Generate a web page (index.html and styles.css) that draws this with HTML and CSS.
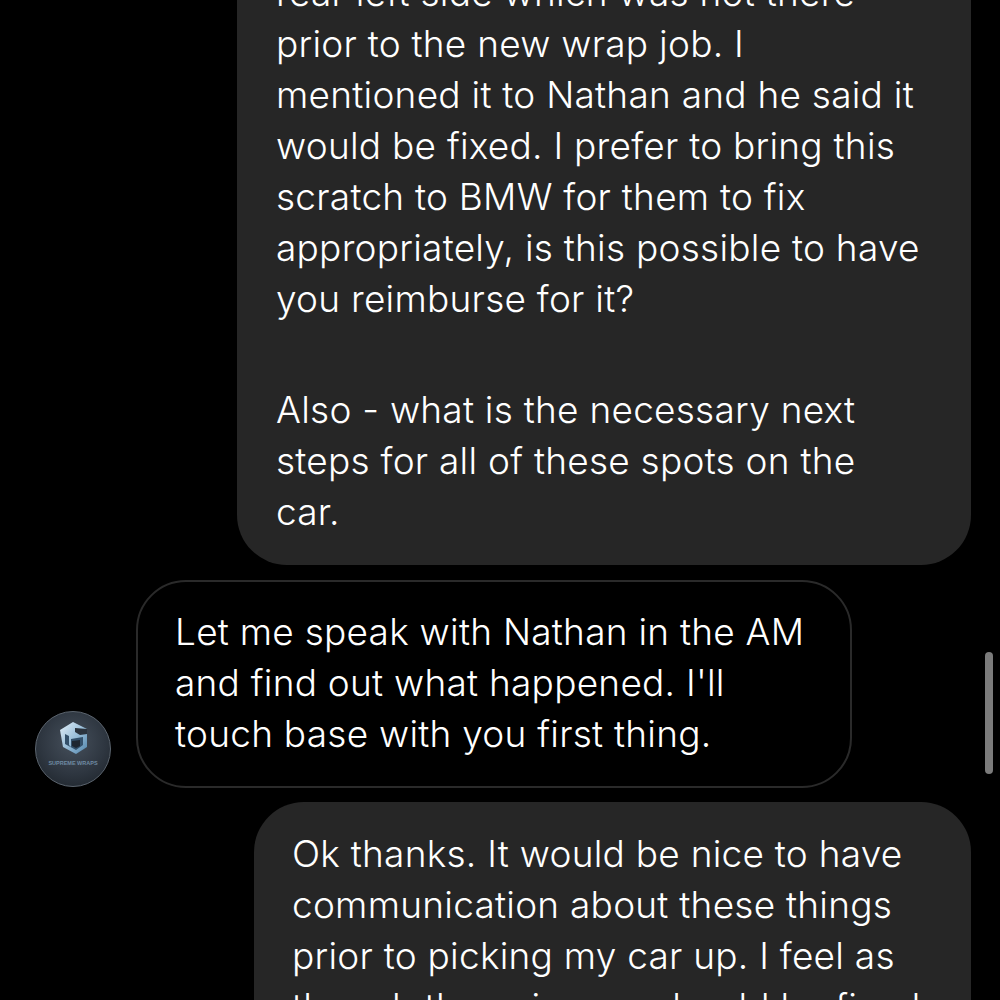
FILE: index.html
```html
<!DOCTYPE html>
<html lang="en">
<head>
    <meta charset="UTF-8">
    <meta name="viewport" content="width=device-width, initial-scale=1.0">
    <title>Messages</title>
    <link rel="stylesheet" href="styles.css">
</head>
<body>
    <div class="thread">
        <div class="row row-sent">
            <div class="bubble bubble-sent bubble-wide">
                <p>rear left side which was not there<br>prior to the new wrap job. I<br>mentioned it to Nathan and he said it<br>would be fixed. I prefer to bring this<br>scratch to BMW for them to fix<br>appropriately, is this possible to have<br>you reimburse for it?</p>
                <p>Also - what is the necessary next<br>steps for all of these spots on the<br>car.</p>
            </div>
        </div>

        <div class="row row-received">
            <svg class="avatar" viewBox="0 0 78 78" role="img" aria-label="Supreme Wraps logo">
                <defs>
                    <radialGradient id="discFill" cx="50%" cy="40%" r="62%">
                        <stop offset="0" stop-color="#46505c"/>
                        <stop offset="0.7" stop-color="#2e3640"/>
                        <stop offset="1" stop-color="#232a32"/>
                    </radialGradient>
                    <linearGradient id="cubeFill" x1="0" y1="0" x2="1" y2="1">
                        <stop offset="0" stop-color="#e2eff8"/>
                        <stop offset="0.5" stop-color="#9cc0da"/>
                        <stop offset="1" stop-color="#4f83aa"/>
                    </linearGradient>
                </defs>
                <circle cx="39" cy="39" r="37.5" fill="url(#discFill)" stroke="#5b646e" stroke-width="1"/>
                <path d="M26 20 L39 12 L53 19 L53 37 L42 44 L29 37 Z" fill="url(#cubeFill)"/>
                <path d="M41 18 L53 19 L53 24 L46 25 L41 22 Z" fill="#2b333d"/>
                <path d="M31 24 L35 26 L35 35 L37 37 L37 29 L49 27 L49 35 L42 40 L31 34 Z" fill="#33506a"/>
                <path d="M38 31 L46 30 L46 36 L42 38 L38 36 Z" fill="#1e2630"/>
                <text class="avatar-label" x="39" y="55" text-anchor="middle">SUPREME WRAPS</text>
            </svg>
            <div class="bubble bubble-received">
                <p>Let me speak with Nathan in the AM<br>and find out what happened. I'll<br>touch base with you first thing.</p>
            </div>
        </div>

        <div class="row row-sent">
            <div class="bubble bubble-sent bubble-last">
                <p>Ok thanks. It would be nice to have<br>communication about these things<br>prior to picking my car up. I feel as<br>though these issues should be fixed</p>
            </div>
        </div>
    </div>

    <div class="scroll-thumb"></div>
</body>
</html>
```

FILE: styles.css
```css
html, body {
    height: 100%;
}

body {
    margin: 0;
    background-color: #000;
    color: #fff;
    font-family: 'Inter', 'Liberation Sans', sans-serif;
    overflow: hidden;
    position: relative;
}

.thread {
    display: flex;
    flex-direction: column;
    margin-top: -63px;
    padding-right: 29px;
}

.row {
    display: flex;
    align-items: flex-end;
}

.row-sent {
    justify-content: flex-end;
}

.row-received {
    margin-top: 15px;
    padding-left: 34px;
    gap: 24px;
}

.row-received + .row-sent {
    margin-top: 14px;
}

.avatar {
    width: 78px;
    height: 78px;
    flex-shrink: 0;
    display: block;
}

.avatar-label {
    font-family: 'Liberation Sans', sans-serif;
    font-size: 5.5px;
    font-weight: 700;
    fill: #6f8ba3;
}

.bubble {
    border-radius: 50px;
    font-size: 37px;
    font-weight: 300;
    line-height: 51px;
    letter-spacing: 0.25px;
    box-sizing: border-box;
    width: 716px;
}

.bubble p {
    margin: 0;
}

.bubble p + p {
    margin-top: 60px;
}

.bubble-sent {
    background-color: #262626;
}

.bubble-wide {
    width: 734px;
    padding: 30px 39px 28px;
}

.bubble-received {
    border: 2px solid #2a2a2a;
    padding: 24px 37px 27px;
}

.bubble-last {
    width: 717px;
    padding: 26px 38px;
}

.scroll-thumb {
    position: absolute;
    left: 985px;
    top: 652px;
    width: 8px;
    height: 122px;
    border-radius: 4px;
    background-color: #7b7b7b;
}
```
